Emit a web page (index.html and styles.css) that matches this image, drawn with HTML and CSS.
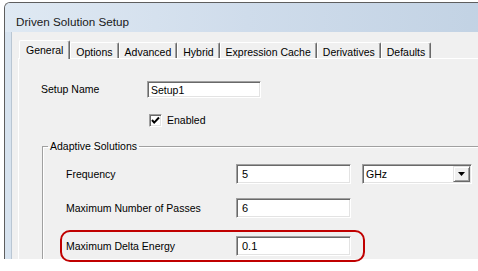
FILE: index.html
```html
<!DOCTYPE html>
<html>
<head>
<meta charset="utf-8">
<title>Driven Solution Setup</title>
<link rel="stylesheet" href="styles.css">
</head>
<body>
<div class="screen">
  <div class="clip">
    <div class="window">
      <div class="titlebar">Driven Solution Setup</div>
      <div class="client">
        <div class="tabs">
          <div class="tab active">General</div>
          <div class="tab">Options</div>
          <div class="tab">Advanced</div>
          <div class="tab">Hybrid</div>
          <div class="tab">Expression Cache</div>
          <div class="tab">Derivatives</div>
          <div class="tab">Defaults</div>
        </div>
        <div class="panel">
          <div class="row setup-row">
            <span class="label">Setup Name</span>
            <div class="field name-field">Setup1</div>
          </div>
          <div class="check-row">
            <span class="checkbox">
              <svg width="9" height="9" viewBox="0 0 9 9"><path d="M1 4 L3.2 6.6 L8 1.5" fill="none" stroke="#000" stroke-width="2"/></svg>
            </span>
            <span class="label">Enabled</span>
          </div>
          <fieldset class="group">
            <legend>Adaptive Solutions</legend>
            <div class="grow freq-row">
              <span class="label">Frequency</span>
              <div class="field num">5</div>
              <div class="select">
                <span class="select-text">GHz</span>
                <span class="drop-btn">
                  <svg width="7" height="4" viewBox="0 0 7 4"><path d="M0 0 H7 L3.5 4 Z" fill="#000"/></svg>
                </span>
              </div>
            </div>
            <div class="grow passes-row">
              <span class="label">Maximum Number of Passes</span>
              <div class="field num">6</div>
            </div>
            <div class="grow delta-row">
              <span class="label">Maximum Delta Energy</span>
              <div class="field num">0.1</div>
            </div>
          </fieldset>
        </div>
      </div>
    </div>
  </div>
  <div class="highlight"></div>
</div>
</body>
</html>
```

FILE: styles.css
```css
* { box-sizing: border-box; }

html, body {
  margin: 0;
  padding: 0;
  background: #ffffff;
}

body {
  font-family: "Liberation Sans", Arial, sans-serif;
  font-size: 10.5px;
  color: #000;
}

.screen {
  position: relative;
  width: 478px;
  height: 271px;
  overflow: hidden;
}

.clip {
  width: 478px;
  height: 259px;
  overflow: hidden;
  padding: 2px 0 0 4px;
}

.window {
  width: 540px;
  height: 300px;
  border-top: 1px solid #5e5e5e;
  border-left: 1px solid #5e5e5e;
  border-top-left-radius: 6px;
  background: #d7e3ef;
  overflow: hidden;
}

.titlebar {
  height: 29px;
  padding: 12px 0 0 11px;
  font-size: 11.7px;
  line-height: 13px;
  color: #1a1a1a;
  background: linear-gradient(to right, #dfe9f3 0%, #cfdceb 45%, #bfd0e2 100%);
}

.client {
  margin-left: 6px;
  height: 280px;
  background: #f0f0f0;
  border-left: 1px solid #b9c6d3;
  padding: 8px 0 0 6px;
}

.tabs {
  display: flex;
  align-items: flex-end;
  height: 18px;
  padding-left: 1px;
  position: relative;
  z-index: 1;
}

.tab {
  height: 16px;
  padding: 3px 5px 0 5px;
  line-height: 13px;
  white-space: nowrap;
  border-top: 1px solid #ffffff;
  border-left: 1px solid #ffffff;
  border-right: 1px solid #696969;
  box-shadow: inset -1px 0 #a0a0a0;
  border-top-left-radius: 2px;
  border-top-right-radius: 2px;
  background: #f0f0f0;
}

.tab.active {
  height: 19px;
  margin-bottom: -1px;
  padding: 3px 6px 3px 6px;
}

.panel {
  border-top: 1px solid #ffffff;
  border-left: 1px solid #ffffff;
  height: 260px;
  padding: 22px 0 0 22px;
}

.row {
  display: grid;
  grid-template-columns: 106px auto;
  align-items: center;
}

.label {
  line-height: 13px;
  white-space: nowrap;
}

.field {
  background: #ffffff;
  border: 1px solid;
  border-color: #a0a0a0 #ffffff #ffffff #a0a0a0;
  box-shadow: inset 1px 1px #696969, inset -1px -1px #e3e3e3;
  display: flex;
  align-items: center;
  white-space: nowrap;
}

.name-field {
  width: 114px;
  height: 17px;
  padding-left: 3px;
}

.check-row {
  display: flex;
  align-items: center;
  gap: 5px;
  margin: 16px 0 0 108px;
  height: 13px;
}

.checkbox {
  width: 13px;
  height: 13px;
  background: #ffffff;
  border: 1px solid;
  border-color: #a0a0a0 #ffffff #ffffff #a0a0a0;
  box-shadow: inset 1px 1px #696969, inset -1px -1px #e3e3e3;
  display: flex;
  align-items: center;
  justify-content: center;
}

.group {
  margin: 13px 0 0 1px;
  padding: 0 0 40px 0;
  border: 1px solid #a0a0a0;
  box-shadow: inset 1px 1px #ffffff;
  min-width: 0;
}

.group legend {
  margin-left: 5px;
  padding: 0 2px;
  line-height: 12px;
}

.grow {
  display: grid;
  grid-template-columns: 170px 115px auto;
  align-items: center;
  padding-left: 23px;
}

.freq-row { margin-top: 12px; }
.passes-row { margin-top: 14px; }
.delta-row { margin-top: 18px; }

.num {
  height: 20px;
  padding-left: 5px;
  font-size: 11px;
}

.select {
  margin-left: 11px;
  width: 110px;
  height: 20px;
  background: #ffffff;
  border: 1px solid;
  border-color: #a0a0a0 #ffffff #ffffff #a0a0a0;
  box-shadow: inset 1px 1px #696969, inset -1px -1px #e3e3e3;
  display: flex;
  align-items: center;
  justify-content: space-between;
  padding: 1px 1px 1px 3px;
}

.drop-btn {
  width: 17px;
  height: 16px;
  background: #f0f0f0;
  border: 1px solid;
  border-color: #e3e3e3 #696969 #696969 #e3e3e3;
  box-shadow: inset 1px 1px #ffffff, inset -1px -1px #a0a0a0;
  display: flex;
  align-items: center;
  justify-content: center;
}

.highlight {
  position: absolute;
  left: 60px;
  top: 230px;
  width: 305px;
  height: 32px;
  border: 2px solid #c00000;
  border-radius: 10px;
}
```
